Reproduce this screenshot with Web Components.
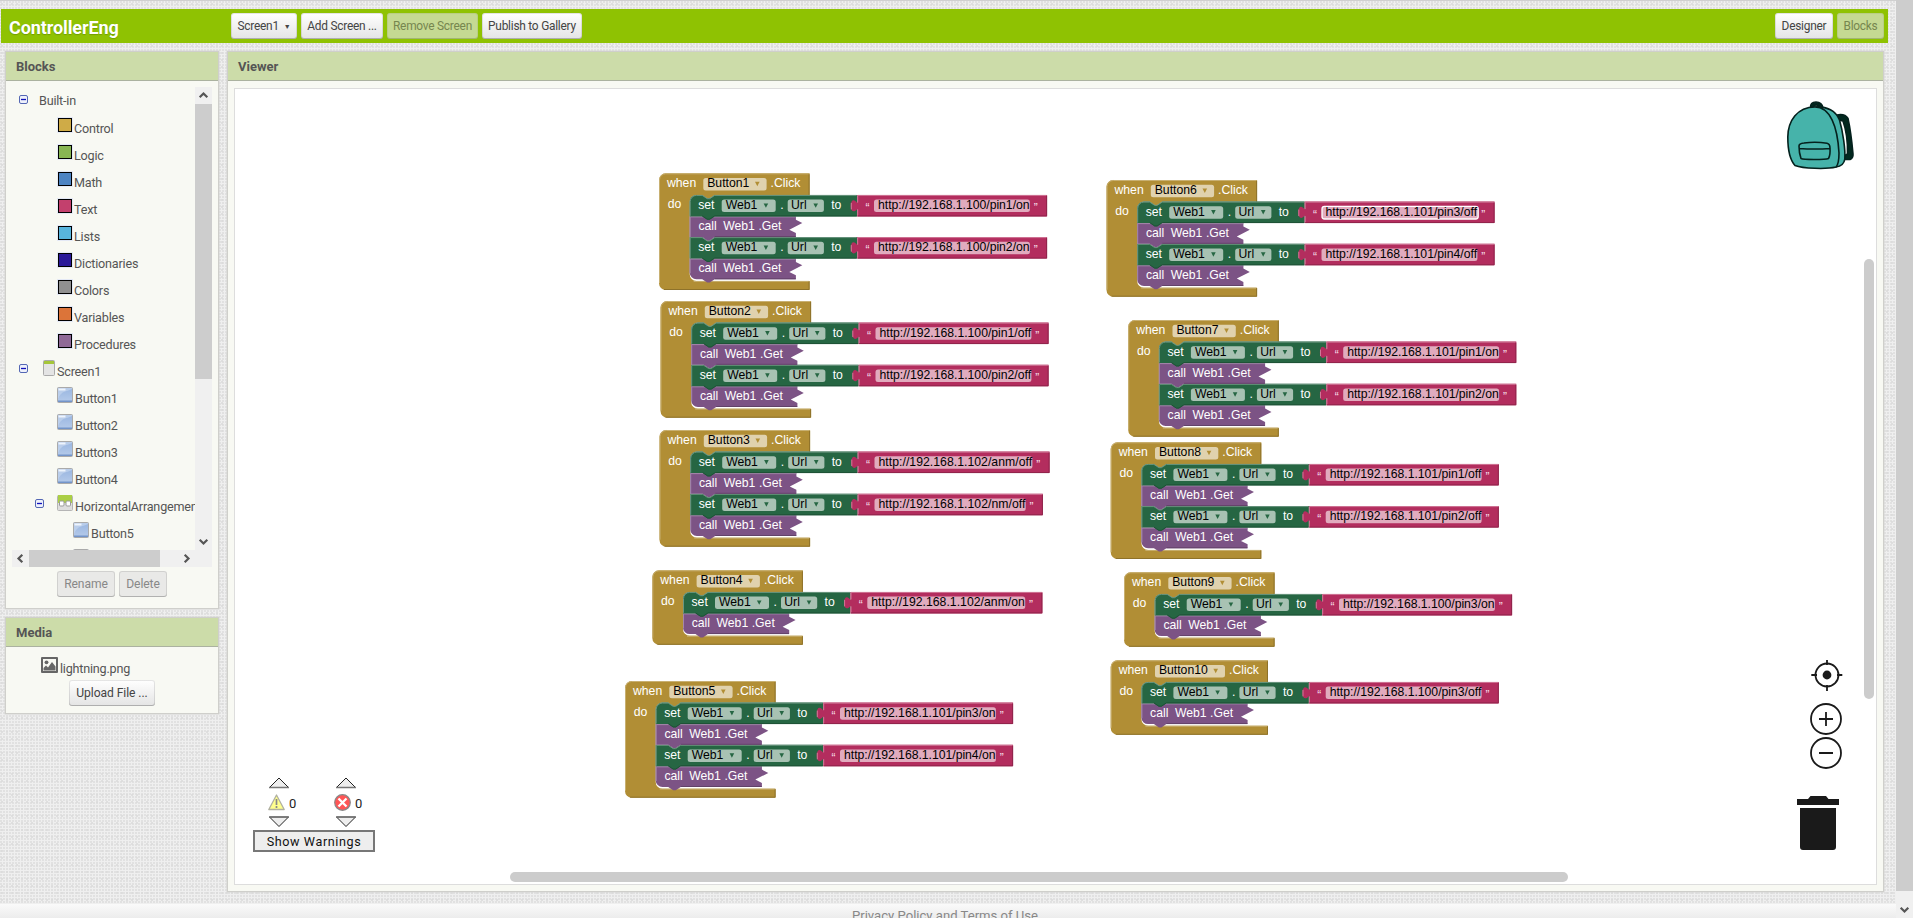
<!DOCTYPE html>
<html lang="en">
<head>
<meta charset="utf-8">
<title>ControllerEng</title>
<style>
html,body{margin:0;height:100%;overflow:hidden}
body{font-family:Roboto,"Liberation Sans",sans-serif;font-size:13px;color:#555}
</style>
</head>
<body>
<block-studio></block-studio>
<script>
const define = (name, html, setup) => {
  customElements.define(name, class extends HTMLElement {
    constructor() {
      super();
      this.attachShadow({ mode: 'open' });
    }
    connectedCallback() {
      const t = document.createElement('template');
      t.innerHTML = typeof html === 'function' ? html(this) : html;
      this.shadowRoot.replaceChildren(t.content.cloneNode(true));
      if (setup) setup(this);
    }
  });
};
const at = (el, n, d = '') => el.getAttribute(n) ?? d;

define('tool-button', `
<style>
:host{display:block;box-sizing:border-box;height:26px;border-radius:3px;background:linear-gradient(#fff,#e4e4e4);
 box-shadow:inset 0 0 0 1px rgba(0,0,0,.1),inset 0 -1px 0 rgba(0,0,0,.15);color:#444;font-size:12.1px;line-height:27px;letter-spacing:-.07px;text-align:center;white-space:nowrap}
:host([flat]){background:#e9e9e7;color:#888}
:host([ghost]){background:#c5d993;color:#76864f;box-shadow:inset 0 -1px 0 rgba(0,0,0,.12),inset 0 0 0 1px rgba(90,120,0,.1)}
</style><slot></slot>`);

define('title-bar', `
<style>
:host{display:flex;align-items:center;box-sizing:border-box;height:34px;background:#8fc202;padding:0 4px 0 8px}
h1{margin:4px 0 0;width:222px;font-size:18px;line-height:24px;font-weight:700;color:#fff;letter-spacing:-.1px;text-shadow:0 1px 1px rgba(60,90,0,.35)}
.g{display:flex;gap:4px}
.g tool-button{font-size:11.9px;letter-spacing:-.24px}
.r{margin-left:auto}
small{font-size:7px;display:inline-block;transform:translateY(-1px);margin-left:5px}
</style>
<h1>ControllerEng</h1>
<div class="g">
<tool-button style="width:66px">Screen1<small>▼</small></tool-button>
<tool-button style="width:82px">Add Screen ...</tool-button>
<tool-button ghost style="width:91px">Remove Screen</tool-button>
<tool-button style="width:100px">Publish to Gallery</tool-button>
</div>
<div class="g r">
<tool-button style="width:58px">Designer</tool-button>
<tool-button ghost style="width:47px">Blocks</tool-button>
</div>`);

define('side-panel', el => `
<style>
:host{display:flex;flex-direction:column;box-sizing:border-box;border:1px solid #cfcfcb;background:#f8f9f3;box-shadow:0 0 0 .5px #d8d8d6}
header{flex:none;height:29px;box-sizing:border-box;background:#ccdca9;border-bottom:1px solid #abb2a0;padding-left:10px;
 font-weight:700;font-size:13px;line-height:30px;color:#555}
</style>
<header>${at(el, 'heading')}</header><slot></slot>`);

const treeIcons = {
  button: `<svg width="16" height="16"><defs><linearGradient id="g" x2="0" y2="1"><stop stop-color="#98b5e0"/><stop offset="1" stop-color="#b6cbea"/></linearGradient></defs>
  <rect x=".5" y=".5" width="15" height="15" rx="1" fill="url(#g)" stroke="#aaa"/><path d="M1 12Q3 6 8 4.500T15 2V1H1z" fill="#c5d6ee" opacity=".7"/><rect x="1.500" y="1.500" width="7" height="2" fill="#eef4fc"/><path d="M1 13.500H15V15H1z" fill="#7394c9"/></svg>`,
  screen: `<svg width="12" height="16"><rect x=".5" y=".5" width="11" height="15" rx="1" fill="#e4e4e4" stroke="#aaa"/><path d="M1 1H11V4H1z" fill="#a5c639"/></svg>`,
  harr: `<svg width="16" height="16"><rect x=".5" y=".5" width="15" height="15" rx="1" fill="#dedede" stroke="#b5b5b5"/><path d="M1 0H15V8H1z" fill="#abcf45"/><rect x="2.500" y="6" width="4.500" height="5" rx="1" fill="#fff" stroke="#999"/><rect x="9" y="6" width="4.500" height="5" rx="1" fill="#fff" stroke="#999"/></svg>`,
  image: `<svg width="17" height="16"><rect width="17" height="16" rx="1" fill="#666"/><path d="M2 2H15V14H2z" fill="#f8f9f3"/><circle cx="5.500" cy="5.300" r="1.900" fill="#666"/><path d="M2.500 13.500V11L5 8.500 7 10.500 11 5 14.500 9.500V13.500z" fill="#666"/></svg>`
};
define('tree-row', el => {
  const c = at(el, 'color'), i = at(el, 'icon'), t = at(el, 'toggle');
  return `
<style>
:host{display:flex;height:27px;position:relative;white-space:nowrap;font-size:12.6px;padding-left:${at(el, 'indent', '0')}px}
.i{flex:none;height:16px;margin-right:2px;display:block}
.c{width:12px;height:12px;margin:1px 2px 0 1px;border:1px solid #000;outline:1px solid #e4e9f6;background:${c}}
span{margin-top:${c || i ? 4 : 3}px;line-height:16px;letter-spacing:-.2px}
.t{position:absolute;left:${t}px;top:${i ? 4 : 5}px}
</style>
${t ? '<svg class="t" width="9" height="9"><rect x=".5" y=".5" width="8" height="8" rx="1.500" fill="#eef1fb" stroke="#5467b4"/><path d="M2 4.500H7" stroke="#11b" stroke-width="1.300"/></svg>' : ''}
${c ? '<div class="c"></div>' : ''}${i ? `<div class="i">${treeIcons[i]}</div>` : ''}<span><slot></slot></span>`;
});

const chev = r => `<svg width="17" height="17"><path transform="rotate(${r} 8.500 8.500)" d="M4.700 10.300 8.500 6.500 12.300 10.300" fill="none" stroke="#555" stroke-width="2.200"/></svg>`;
define('scroll-strip', el => {
  const v = !el.hasAttribute('horizontal');
  return `
<style>
:host{display:flex;flex-direction:${v ? 'column' : 'row'};background:#f0f0f0}
svg{display:block;flex:none}
.th{background:#cdcdcd;flex:none;${v ? 'height' : 'width'}:${at(el, 'thumb')}px}
.sp{flex:1}
</style>
${el.hasAttribute('headless') ? '' : chev(v ? 0 : -90)}<div class="th"></div><div class="sp"></div>${chev(v ? 180 : 90)}`;
});

define('block-tree', `
<style>
:host{display:grid;grid-template:463px 17px/183px 17px;margin:6px 0 0 6px}
.tree{overflow:hidden;padding-top:3px}
.corner{background:#f0f0f0}
</style>
<div class="tree"></div>
<scroll-strip thumb="275"></scroll-strip>
<scroll-strip horizontal thumb="131"></scroll-strip><div class="corner"></div>`, el => {
  const rows = [
    ['Built-in', { indent: 27, toggle: 7 }],
    ['Control', { indent: 45, color: '#cfab47' }], ['Logic', { indent: 45, color: '#88b653' }],
    ['Math', { indent: 45, color: '#4d84c2' }], ['Text', { indent: 45, color: '#c3406d' }],
    ['Lists', { indent: 45, color: '#58b5dd' }], ['Dictionaries', { indent: 45, color: '#2a1898' }],
    ['Colors', { indent: 45, color: '#909090' }], ['Variables', { indent: 45, color: '#dc7439' }],
    ['Procedures', { indent: 45, color: '#8f6997' }],
    ['Screen1', { indent: 31, icon: 'screen', toggle: 7 }],
    ['Button1', { indent: 45, icon: 'button' }], ['Button2', { indent: 45, icon: 'button' }],
    ['Button3', { indent: 45, icon: 'button' }], ['Button4', { indent: 45, icon: 'button' }],
    ['HorizontalArrangemen', { indent: 45, icon: 'harr', toggle: 23 }],
    ['Button5', { indent: 61, icon: 'button' }], ['', { indent: 61, icon: 'button' }]];
  const tree = el.shadowRoot.querySelector('.tree');
  for (const [label, a] of rows) {
    const r = document.createElement('tree-row');
    for (const k in a) r.setAttribute(k, a[k]);
    r.textContent = label;
    tree.append(r);
  }
});

/* One "when ButtonN.Click" handler with its stack of set/call statements. */
define('event-block', el => {
  const x = +at(el, 'x'), y = +at(el, 'y'), fx = x - Math.floor(x), fy = y - Math.floor(y);
  const name = at(el, 'name'), urls = at(el, 'urls').split(' ');
  const wide = name.length > 7 ? 6.7 : 0, W = 150.6 + wide;
  const n = urls.length, SX = 30.7, SY = 21.6, P = 42.2;
  const barY = SY + n * P + 1.7, H = barY + 9;
  const bevel = (d, c) => `<path d="${d}" fill="${c}"/>`;
  const hi = (d, c) => `<path d="${d}" fill="none" stroke="${c}" stroke-width="1"/>`;
  const arrow = (ax, ay, c) => `<path d="M${ax - 2.3} ${ay - 1.8}H${ax + 2.3}L${ax} ${ay + 2.6}z" fill="${c}"/>`;
  const txt = (tx, ty, s, extra = '') => `<text x="${tx}" y="${ty}" ${extra}>${s}</text>`;
  const field = (x0, x1, y0, op = .6) => `<rect x="${x0}" y="${y0}" width="${x1 - x0}" height="12.500" rx="2.500" fill="#fff" fill-opacity="${op}"/>`;

  let out = bevel(`M0 6.700A6.700 6.700 0 0 1 6.700 0H${W}V${SY}H${SX + 25}L${SX + 20} ${SY + 3.3}H${SX + 17.5}L${SX + 12.5} ${SY}H${SX + 6.700}A6.700 6.700 0 0 0 ${SX} ${SY + 6.700}V${barY - 6.700}A6.700 6.700 0 0 0 ${SX + 6.700} ${barY}H${W}V${H}H6.700A6.700 6.700 0 0 1 0 ${H - 6.700}z`, '#b18e35')
    + hi(`M.5 ${H - 7}V6.700A6.200 6.200 0 0 1 6.700 .5H${W - .5}M${SX + 4} ${barY + .4}H${W - .5}`, '#c8b072')
    + hi(`M5 ${H - .5}H${W - .5}V${barY + .5}M${W - .5} ${SY}V1`, '#8e722a')
    + txt(8, 14.200, 'when') + field(44.300, 107.600 + wide, 4.800)
    + txt(48.200, 14.200, name, 'class="k"') + arrow(98.300 + wide, 10.300, '#b18e35')
    + txt(111.600 + wide, 14.200, '.Click') + txt(8.700, 35, 'do');

  let body = '';
  for (let i = n - 1; i >= 0; i--) {
    const u = urls[i], ty = SY + i * P, last = i === n - 1;
    const extra = u.includes('/anm') ? 2 : u.includes('/nm') ? -4.700 : 0;
    const notch = (yy) => `H25L20 ${yy + 3.300}H17.500L12.500 ${yy}`;
    const cy = 21.500, ch = 20.700, ce = cy + ch;
    const jag = `H106.200V${cy + 3.300}L112.600 ${cy + 6.600}L99.600 ${cy + 13.300}L106.200 ${cy + 16.600}V${ce}`;
    body += `<g transform="translate(${SX} ${ty})">`
      + bevel(`M0 ${cy}${jag}${notch(ce)}${last ? `H6.700A6.700 6.700 0 0 1 0 ${ce - 6.700}` : 'H0'}z`, '#7c5385')
      + hi(`M.5 ${ce - (last ? 6 : 0)}V${cy + .5}H106`, '#a487aa')
      + hi(`M25 ${ce - .5}H106`, '#634269')
      + txt(8.700, cy + 13.900, 'call') + txt(33.500, cy + 13.900, 'Web1') + txt(68.700, cy + 13.900, '.Get')
      + bevel(i === 0
        ? `M6.700 0H12.500L17.500 3.300H20L25 0H167.500V21.500${notch(21.500)}H0V6.700A6.700 6.700 0 0 1 6.700 0z`
        : `M0 0H12.500L17.500 3.300H20L25 0H167.500V21.500${notch(21.500)}H0z`, '#266643')
      + hi(`M.5 21${i === 0 ? 'V6.700A6.200 6.200 0 0 1 6.700 .5' : 'V.5'}H12.500L17.500 3.800H20L25 .5H167`, '#6c9680')
      + hi('M25 21H167M12.500 21 17.500 24.300H20L25 21', '#1e5236')
      + txt(8.500, 14.200, 'set') + field(32, 86, 4.700) + txt(36, 14.200, 'Web1', 'class="k"') + arrow(76.200, 10.300, '#266643')
      + txt(90.500, 14.200, '.') + field(98, 134.200, 4.700) + txt(101.300, 14.200, 'Url', 'class="k"') + arrow(126, 10.300, '#266643')
      + txt(141.500, 14.200, 'to')
      + bevel(`M167.500 0H${357.400 + extra}V21.500H167.500V14C165 17.500 161 17.500 161 11S164.500 3.500 167.500 8z`, '#b32d5e')
      + hi(`M168 21V14.500M168 7.500V.5H${357 + extra}`, '#d07998')
      + hi(`M168 21H${356.900 + extra}V1`, '#8f244b')
      + hi('M161.600 14.500V8', '#d07998')
      + txt(175.800, 17, '“', 'class="q"') + txt(344, 17, '”', `class="q" dx="${extra}"`)
      + (el.hasAttribute('selected') && i === 0 ? `<rect x="184.800" y="4.800" width="156.200" height="12.600" rx="2.500" fill="#e1abbf" stroke="#fff" stroke-width="1.300"/>` : field(184.300, 340.200 + extra, 4.700))
      + txt(188.300, 14.200, u, `class="k" textLength="${151.600 + extra}"`)
      + `</g>`;
  }
  return `
<style>
:host{position:absolute;left:${Math.floor(x)}px;top:${Math.floor(y)}px}
svg{display:block;overflow:visible}
text{font:12.220px "Liberation Sans",Arial,sans-serif;fill:#fff;white-space:pre}
.k{fill:#000}
.q{font-size:12px;fill:#f6dfe8}
</style>
<svg width="${W + 260}" height="${H + 2}"><g transform="translate(${fx} ${fy})">${out}${body}</g></svg>`;
});

define('warning-box', `
<style>
:host{position:absolute;left:18px;top:688px;width:122px;color:#222}
.cols{display:grid;grid-template-columns:67px 67px;padding-left:15px}
.col{display:flex;flex-direction:column;align-items:flex-start}
.tri{margin-left:1px;display:block}
.mid{display:flex;align-items:center;gap:4px;height:17px;margin:5px 0 5px;font-size:13px;line-height:17px}
.col:nth-child(2) .mid{margin-left:-1px}
.mid span{padding-top:2px}
button{display:block;box-sizing:border-box;width:122px;height:22px;margin-top:2px;padding:0;border:2px solid #777;background:#eee;font:12.6px/19px Roboto,sans-serif;letter-spacing:.6px;color:#111}
</style>
<div class="cols">
<div class="col"><svg class="tri" width="21" height="12"><path d="M.5 10.500 10 1 19.500 10.500z" fill="#eee" stroke="#222"/><path d="M0 10.500H20" stroke="#777" stroke-width="1.500"/></svg>
<div class="mid"><svg width="17" height="17"><path d="M8.500 1 16.200 15.500H.8z" fill="#ffff8d" stroke="#b0b0a0" stroke-width="1.300" stroke-linejoin="round"/><path d="M8.500 5V11M8.500 12V14" stroke="#888" stroke-width="1.700"/></svg><span>0</span></div>
<svg class="tri" width="21" height="12"><path d="M.5 1 10 10.500 19.500 1z" fill="#eee" stroke="#222"/><path d="M0 1H20" stroke="#777" stroke-width="1.500"/></svg></div>
<div class="col"><svg class="tri" width="21" height="12"><path d="M.5 10.500 10 1 19.500 10.500z" fill="#eee" stroke="#222"/><path d="M0 10.500H20" stroke="#777" stroke-width="1.500"/></svg>
<div class="mid"><svg width="17" height="17"><circle cx="8.500" cy="8.500" r="7.800" fill="#f55" stroke="#888" stroke-width="1.200"/><path d="M4.500 4.500 12.500 12.500M12.500 4.500 4.500 12.500" stroke="#fff" stroke-width="2.300"/></svg><span>0</span></div>
<svg class="tri" width="21" height="12"><path d="M.5 1 10 10.500 19.500 1z" fill="#eee" stroke="#222"/><path d="M0 1H20" stroke="#777" stroke-width="1.500"/></svg></div>
</div>
<button>Show Warnings</button>`);

define('canvas-tools', `
<style>
:host{position:absolute;right:18px;top:10px}
svg{position:absolute;right:0;display:block}
.pack{top:0}.ctl{top:560px}
</style>
<svg class="pack" width="72" height="74" viewBox="1786 99 72 74">
<g stroke="#04211d" stroke-width="1.600" stroke-linejoin="round">
<path d="M1837 115Q1845 113.500 1848 118.500 1851 132 1853 154 1853.300 158 1850 159.500H1845L1844 156 1847.500 154Q1848 135 1843 121L1838 120z" fill="#02281f"/>
<path d="M1810.500 108Q1810 102 1816 102 1822 102 1823 108L1819.500 107.500Q1819 105 1816 105 1814 105 1813.500 107.500z" fill="#02281f"/>
<path d="M1815 107C1827 106 1836 111 1839.500 120 1843 132 1845.500 150 1844.800 159 1844 165 1840 166.500 1836 167z" fill="#46b3aa"/>
<path d="M1815 107C1797 107 1788 121 1787.800 137 1787.800 151 1790 160 1795 165.500 1803 168.500 1826 169.500 1836 167 1839 164 1839 159 1839 153 1837.500 126 1830 107 1815 107z" fill="#46b3aa"/>
<path d="M1799 146Q1799 143.500 1804 143 1816 141.500 1827 143.300 1830 144 1830 148 1830.500 155 1828.500 158.500 1826 159.500 1814 159.500 1803 159.500 1801 158.500 1799 153 1799 146zM1799 148.500Q1815 149.500 1830 148.500" fill="none"/>
</g></svg>
<svg class="ctl" width="60" height="205" viewBox="1798 659 60 205" style="overflow:visible">
<g fill="none" stroke="#1a1a1a" stroke-width="1.800"><circle cx="1827" cy="675" r="11.500"/><path d="M1827 660V665M1827 685V691M1811.300 675H1817M1837 675H1842.300"/><circle cx="1826" cy="719" r="15"/><circle cx="1826" cy="753" r="15"/><path d="M1819 719H1833M1826 712V726M1819 753H1833"/></g>
<circle cx="1827" cy="675" r="4.400" fill="#1a1a1a"/>
<path d="M1797 799H1808L1810.500 796H1826L1828.500 799H1839V805H1797zM1800 808H1836V847Q1836 850 1833 850H1803Q1800 850 1800 847z" fill="#1a1a1a"/></svg>`);

define('blocks-canvas', `
<style>
:host{display:block;position:relative;background:#fff;border:1px solid #ddd;overflow:hidden;box-sizing:border-box}
.bar{position:absolute;background:#ccc;border-radius:5px}
</style>
<event-block name="Button1" x="424" y="84.300" urls="http://192.168.1.100/pin1/on http://192.168.1.100/pin2/on"></event-block>
<event-block name="Button2" x="425.500" y="212" urls="http://192.168.1.100/pin1/off http://192.168.1.100/pin2/off"></event-block>
<event-block name="Button3" x="424.500" y="341" urls="http://192.168.1.102/anm/off http://192.168.1.102/nm/off"></event-block>
<event-block name="Button4" x="417.300" y="481.300" urls="http://192.168.1.102/anm/on"></event-block>
<event-block name="Button5" x="390" y="592" urls="http://192.168.1.101/pin3/on http://192.168.1.101/pin4/on"></event-block>
<event-block name="Button6" selected x="871.500" y="91" urls="http://192.168.1.101/pin3/off http://192.168.1.101/pin4/off"></event-block>
<event-block name="Button7" x="893.200" y="231" urls="http://192.168.1.101/pin1/on http://192.168.1.101/pin2/on"></event-block>
<event-block name="Button8" x="875.700" y="353.300" urls="http://192.168.1.101/pin1/off http://192.168.1.101/pin2/off"></event-block>
<event-block name="Button9" x="889" y="483.300" urls="http://192.168.1.100/pin3/on"></event-block>
<event-block name="Button10" x="875.700" y="571.300" urls="http://192.168.1.100/pin3/off"></event-block>
<div class="bar" style="left:275px;top:783px;width:1058px;height:10px"></div>
<div class="bar" style="left:1629px;top:170px;width:10px;height:440px"></div>
<warning-box></warning-box><canvas-tools></canvas-tools>`);

define('block-studio', `
<style>
:host{display:flex;width:1913px;height:918px;overflow:hidden}
.page{width:1896px;height:918px;flex:none;display:flex;flex-direction:column;box-sizing:border-box;border-top:1px solid #d0d0d0;
 background:radial-gradient(circle at 1px 1px,#dadada .6px,transparent .9px) 0 0/3px 3px,radial-gradient(circle at 2px 3px,#dedede .7px,transparent 1px) 0 0/5px 7px,#efefef}
title-bar{margin:8px 8px 8px 1px}
.main{display:flex;flex:none;height:841px;gap:8px;padding-left:5px}
.side{width:214px;display:flex;flex-direction:column;gap:8px}
.p1{height:558px}.p2{height:97px}
.btns{display:flex;gap:4px;margin:4px 0 0 51px}
.viewer{width:1657px}
blocks-canvas{margin:7px 6px 6px;flex:1}
footer{margin-top:12px;height:14px;flex:none;background:linear-gradient(#fafafa,#ececec);text-align:center;font-size:13.1px;line-height:22px;color:#888;padding-right:6px}
footer span{position:relative;top:1px}
.side,.viewer,.p1,.p2,title-bar{flex:none}
scroll-strip{width:17px}
</style>
<div class="page">
<title-bar></title-bar>
<div class="main">
<div class="side">
<side-panel class="p1" heading="Blocks"><block-tree></block-tree>
<div class="btns"><tool-button flat style="width:58px">Rename</tool-button><tool-button flat style="width:48px">Delete</tool-button></div></side-panel>
<side-panel class="p2" heading="Media"><tree-row icon="image" indent="35" style="margin-top:10px;height:23px;box-sizing:border-box">lightning.png</tree-row>
<tool-button style="width:86px;margin-left:63px">Upload File ...</tool-button></side-panel>
</div>
<side-panel class="viewer" heading="Viewer"><blocks-canvas></blocks-canvas></side-panel>
</div>
<footer><span>Privacy Policy and Terms of Use</span></footer>
</div>
<scroll-strip headless thumb="891"></scroll-strip>`);
</script>
</body>
</html>
